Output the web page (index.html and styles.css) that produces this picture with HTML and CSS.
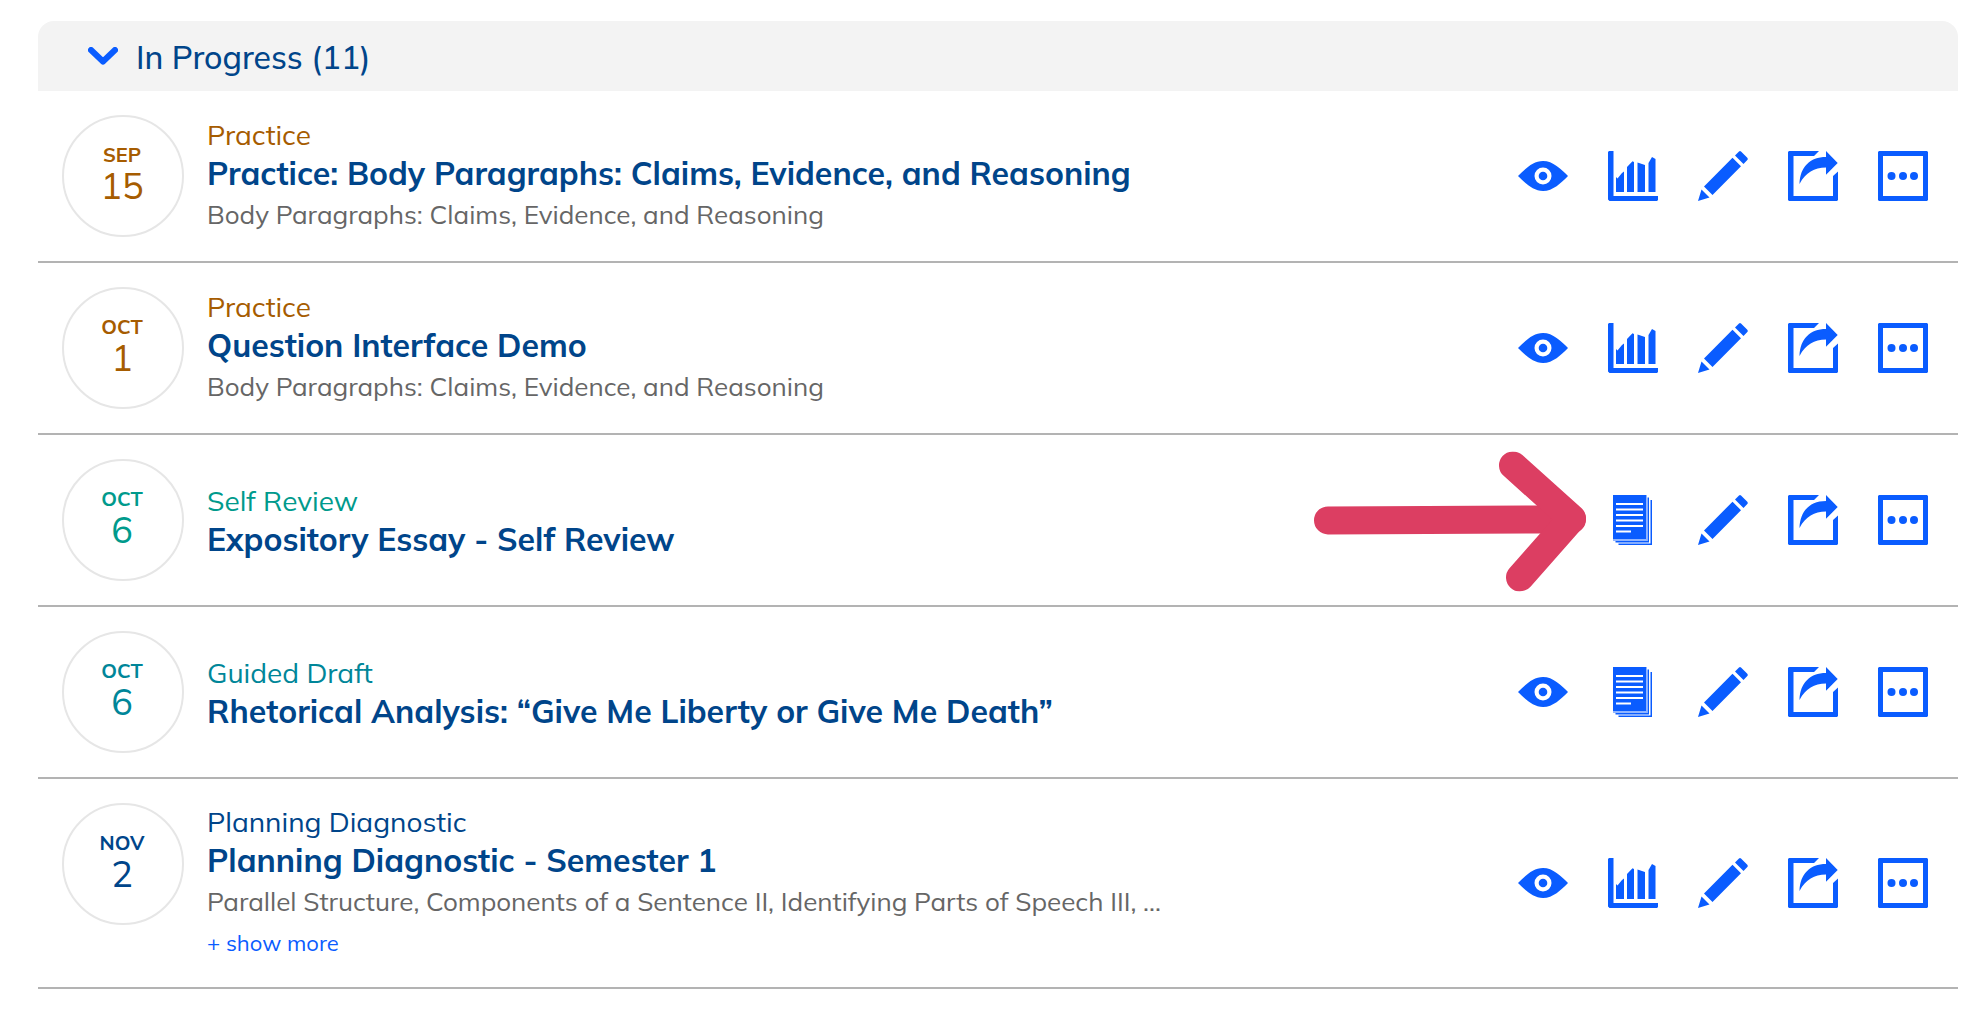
FILE: index.html
```html
<!DOCTYPE html>
<html lang="en">
  <head>
    <meta charset="UTF-8" />
    <meta name="viewport" content="width=device-width, initial-scale=1.0" />
    <title>Assignments</title>
    <link rel="stylesheet" href="styles.css">
  </head>
  <body>
    <!-- Icon shapes shared by all rows -->
    <svg class="icon-defs" aria-hidden="true">
      <symbol id="icon-eye" viewBox="0 0 50 50">
        <path fill-rule="evenodd" d="M0 25C7 18 15 10 25 10s18 8 25 15c-7 7-15 15-25 15S7 32 0 25zM25 16.5a8.5 8.5 0 1 0 0 17a8.5 8.5 0 1 0 0-17z" />
        <circle cx="25" cy="25" r="4.3" />
      </symbol>
      <symbol id="icon-chart" viewBox="0 0 50 50">
        <path d="M1 0H5.500V45H50V49L49 50H1.500L0 48.500V1z" />
        <path d="M8 26L9.500 27.500L14 22L16 20.500V41H8zM19 16L24.500 10.200L26 11V41H19zM29.500 11.500L37 14V41H29.500zM40.500 12L44 6L47.500 8V41H40.500z" />
      </symbol>
      <symbol id="icon-pencil" viewBox="0 0 50 50">
        <path d="M0 50L3.500 38.500L11.500 46.500zM6 35.500L34.500 6.700L43 15.200L14.500 44zM37 4.500L41 .6Q42 -.4 43 .6L49.300 6.700Q50.300 8 49.300 9L45.500 13z" />
      </symbol>
      <symbol id="icon-share" viewBox="0 0 50 50">
        <path d="M1 0H31L26 5H5.500V45H45V25L50 20.500V49L49 50H1L0 49V1z" />
        <path d="M11.500 33C12 16 22 6 38 6V0L49.700 12L38 23.700V16.500C26 17 18 21 11.500 33z" />
      </symbol>
      <symbol id="icon-more" viewBox="0 0 50 50">
        <path fill-rule="evenodd" d="M1 0H49L50 1V49L49 50H1L0 49V1zM5 5V45H45V5z" />
        <circle cx="13.500" cy="25" r="4" />
        <circle cx="25" cy="25" r="4" />
        <circle cx="36" cy="25" r="4" />
      </symbol>
      <symbol id="icon-essay" viewBox="0 0 50 50">
        <path fill-rule="evenodd" d="M5 0H38V44H5zM8 8V10H35V8zM8 13.500V15.500H35V13.500zM8 19V21H35V19zM8 24.500V26.500H35V24.500zM8 30V32H35V30zM8 35.500V37.500H23V35.500z" />
        <path opacity=".45" d="M5 44H38V0H39V46H5z" />
        <path d="M39.500 2.500H41V47.500H7.500V46H39.500zM42.500 5H44V50H10.500V48.500H42.500z" />
      </symbol>
    </svg>

    <main class="assignments">
      <h2 class="section-header">
        <button type="button" class="section-toggle" aria-expanded="true">
          <svg class="chevron" viewBox="0 0 30 18" aria-hidden="true">
            <path d="M3 3L15 14.500L27 3" />
          </svg>
          In Progress (11)
        </button>
      </h2>

      <ul class="assignment-list">
        <li class="assignment practice">
          <div class="date"><span class="month">SEP</span><span class="day">15</span></div>
          <div class="details">
            <div class="type">Practice</div>
            <a href="#" class="title">Practice: Body Paragraphs: Claims, Evidence, and Reasoning</a>
            <div class="topics">Body Paragraphs: Claims, Evidence, and Reasoning</div>
          </div>
          <div class="actions">
            <button type="button" aria-label="Preview"><svg><use href="#icon-eye" /></svg></button>
            <button type="button" aria-label="Results"><svg><use href="#icon-chart" /></svg></button>
            <button type="button" aria-label="Edit"><svg><use href="#icon-pencil" /></svg></button>
            <button type="button" aria-label="Share"><svg><use href="#icon-share" /></svg></button>
            <button type="button" aria-label="More"><svg><use href="#icon-more" /></svg></button>
          </div>
        </li>

        <li class="assignment practice">
          <div class="date"><span class="month">OCT</span><span class="day">1</span></div>
          <div class="details">
            <div class="type">Practice</div>
            <a href="#" class="title">Question Interface Demo</a>
            <div class="topics">Body Paragraphs: Claims, Evidence, and Reasoning</div>
          </div>
          <div class="actions">
            <button type="button" aria-label="Preview"><svg><use href="#icon-eye" /></svg></button>
            <button type="button" aria-label="Results"><svg><use href="#icon-chart" /></svg></button>
            <button type="button" aria-label="Edit"><svg><use href="#icon-pencil" /></svg></button>
            <button type="button" aria-label="Share"><svg><use href="#icon-share" /></svg></button>
            <button type="button" aria-label="More"><svg><use href="#icon-more" /></svg></button>
          </div>
        </li>

        <li class="assignment self-review">
          <div class="date"><span class="month">OCT</span><span class="day">6</span></div>
          <div class="details">
            <div class="type">Self Review</div>
            <a href="#" class="title">Expository Essay - Self Review</a>
          </div>
          <div class="actions">
            <!-- Arrow pointing at the student work icon -->
            <svg class="callout-arrow" viewBox="0 0 272 140" aria-hidden="true">
              <path d="M14 69L258 68" />
              <path d="M199 14L258 67L206 126" />
            </svg>
            <button type="button" aria-label="Student work"><svg><use href="#icon-essay" /></svg></button>
            <button type="button" aria-label="Edit"><svg><use href="#icon-pencil" /></svg></button>
            <button type="button" aria-label="Share"><svg><use href="#icon-share" /></svg></button>
            <button type="button" aria-label="More"><svg><use href="#icon-more" /></svg></button>
          </div>
        </li>

        <li class="assignment guided-draft">
          <div class="date"><span class="month">OCT</span><span class="day">6</span></div>
          <div class="details">
            <div class="type">Guided Draft</div>
            <a href="#" class="title">Rhetorical Analysis: “Give Me Liberty or Give Me Death”</a>
          </div>
          <div class="actions">
            <button type="button" aria-label="Preview"><svg><use href="#icon-eye" /></svg></button>
            <button type="button" aria-label="Student work"><svg><use href="#icon-essay" /></svg></button>
            <button type="button" aria-label="Edit"><svg><use href="#icon-pencil" /></svg></button>
            <button type="button" aria-label="Share"><svg><use href="#icon-share" /></svg></button>
            <button type="button" aria-label="More"><svg><use href="#icon-more" /></svg></button>
          </div>
        </li>

        <li class="assignment diagnostic">
          <div class="date"><span class="month">NOV</span><span class="day">2</span></div>
          <div class="details">
            <div class="type">Planning Diagnostic</div>
            <a href="#" class="title">Planning Diagnostic - Semester 1</a>
            <div class="topics">Parallel Structure, Components of a Sentence II, Identifying Parts of Speech III, ...</div>
            <button type="button" class="show-more">+ show more</button>
          </div>
          <div class="actions">
            <button type="button" aria-label="Preview"><svg><use href="#icon-eye" /></svg></button>
            <button type="button" aria-label="Results"><svg><use href="#icon-chart" /></svg></button>
            <button type="button" aria-label="Edit"><svg><use href="#icon-pencil" /></svg></button>
            <button type="button" aria-label="Share"><svg><use href="#icon-share" /></svg></button>
            <button type="button" aria-label="More"><svg><use href="#icon-more" /></svg></button>
          </div>
        </li>
      </ul>
    </main>
  </body>
</html>
```
FILE: styles.css
```css
* {
  box-sizing: border-box;
}

body {
  margin: 0;
  padding: 21px 20px 0 38px;
  font-family: Mulish, Lato, sans-serif;
  background-color: #fff;
  color: #00458a;
}

button {
  padding: 0;
  border: none;
  background: none;
  font-family: inherit;
  color: inherit;
  cursor: pointer;
}

.icon-defs {
  display: none;
}

/* Section header */
.section-header {
  margin: 0;
  padding: 0 50px;
  background-color: #f3f3f3;
  border-radius: 16px 16px 0 0;
}

.section-toggle {
  display: flex;
  align-items: center;
  gap: 18px;
  height: 70px;
  padding-top: 2px;
  font-size: 32px;
  font-weight: 500;
}

.chevron {
  width: 30px;
  height: 18px;
  margin-bottom: 2px;
  fill: none;
  stroke: #0a5cff;
  stroke-width: 6;
  stroke-linecap: round;
  stroke-linejoin: round;
}

/* Assignment rows */
.assignment-list {
  margin: 0;
  padding: 0;
  list-style: none;
}

.assignment {
  display: flex;
  align-items: center;
  padding: 24px 30px 24px 24px;
  border-bottom: 2px solid #b3b3b3;
}

.date {
  display: flex;
  flex-direction: column;
  align-items: center;
  align-self: flex-start;
  flex-shrink: 0;
  width: 122px;
  height: 122px;
  padding: 26px 2px 0 0;
  border: 2px solid #e6e6e6;
  border-radius: 50%;
}

.month {
  font-size: 20px;
  font-weight: 700;
  line-height: 24px;
}

.day {
  font-size: 36px;
  line-height: 38px;
}

.details {
  flex: 1;
  min-width: 0;
  margin-left: 23px;
}

.type {
  font-size: 28px;
  line-height: 38px;
}

.title {
  display: block;
  font-size: 32px;
  font-weight: 700;
  line-height: 38px;
  color: #00458a;
  text-decoration: none;
}

.title:hover {
  text-decoration: underline;
}

.topics {
  padding-top: 2px;
  font-size: 26px;
  line-height: 42px;
  color: #666;
}

.show-more {
  display: block;
  font-size: 22px;
  line-height: 40px;
  color: #0a5cff;
}

/* Row colors by assignment type */
.practice {
  color: #a65c00;
}

.self-review {
  color: #009a8c;
}

.guided-draft {
  color: #008699;
}

.diagnostic {
  color: #00458a;
}

/* Icon buttons */
.actions {
  position: relative;
  display: flex;
  gap: 40px;
}

.actions button svg {
  display: block;
  width: 50px;
  height: 50px;
  fill: #0a5cff;
}

.callout-arrow {
  position: absolute;
  top: 50%;
  right: 100%;
  width: 272px;
  height: 140px;
  margin-right: 22px;
  transform: translateY(-49%);
  fill: none;
  stroke: #dc3e62;
  stroke-width: 28;
  stroke-linecap: round;
  stroke-linejoin: round;
}
```
